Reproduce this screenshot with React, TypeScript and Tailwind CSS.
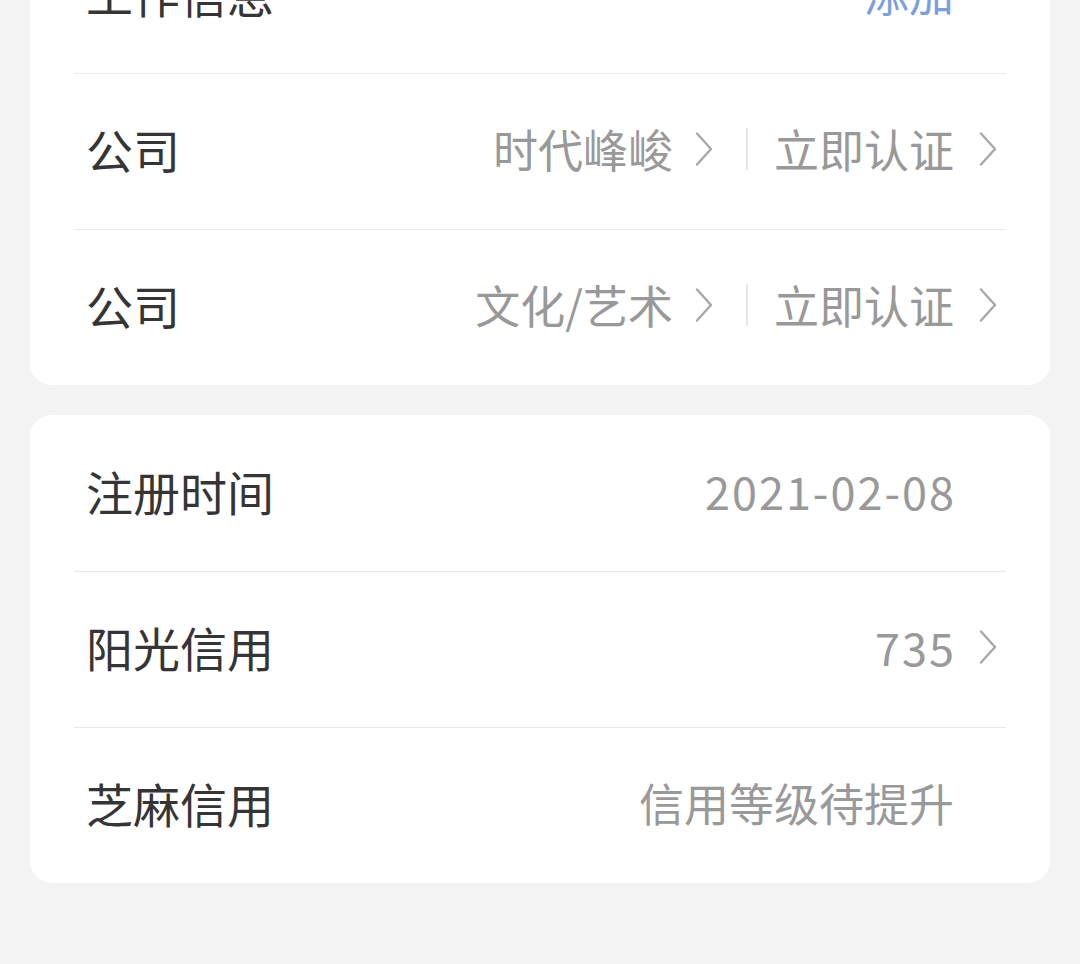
import React from "react";

const FONT = { fontFamily: '"Noto Sans CJK SC", "Noto Sans", sans-serif' };

function Chevron({ hidden = false }: { hidden?: boolean }) {
  return (
    <svg
      width="20"
      height="34"
      viewBox="0 0 20 34"
      className={hidden ? "invisible shrink-0" : "shrink-0"}
    >
      <polyline
        points="3,1.5 17,17 3,32.5"
        fill="none"
        stroke="#a8a8a8"
        strokeWidth="2.4"
        strokeLinecap="round"
        strokeLinejoin="round"
      />
    </svg>
  );
}

type RowProps = {
  label: string;
  value?: string;
  valueClass?: string;
  chevron?: boolean;
  extra?: string;
  first?: boolean;
  numeric?: boolean;
};

function Row({ label, value, valueClass = "text-[#999999]", chevron, extra, first, numeric }: RowProps) {
  return (
    <div
      className={
        "mx-[44px] flex h-[156px] items-center justify-between pb-[6px] " +
        (first ? "" : "border-t border-[#e8e8e8]")
      }
    >
      <span className="pl-[12px] text-[47px] font-normal leading-none text-[#353535]">{label}</span>
      <div className="flex items-center pr-[8px]">
        {extra ? (
          <>
            <span className="text-[45px] font-normal leading-none text-[#999999]">{extra}</span>
            <span className="ml-[21px] flex">
              <Chevron />
            </span>
            <span className="ml-[32px] mr-[26px] h-[42px] w-[2px] bg-[#e6e6e6]" />
          </>
        ) : null}
        <span
          className={
            "text-[45px] font-normal leading-none " +
            (numeric ? "-mr-[2px] tracking-[2px] " : "") +
            valueClass
          }
        >
          {value}
        </span>
        <span className="ml-[24px] flex">
          <Chevron hidden={!chevron} />
        </span>
      </div>
    </div>
  );
}

export default function App() {
  return (
    <div className="h-[964px] w-[1080px] overflow-hidden bg-[#f3f3f3]" style={FONT}>
      <div className="px-[30px]">
        <div className="-mt-[83px] rounded-b-[22px] bg-white">
          <Row first label="工作信息" value="添加" valueClass="text-[#7a9fe0]" />
          <Row label="公司" extra="时代峰峻" value="立即认证" chevron />
          <Row label="公司" extra="文化/艺术" value="立即认证" chevron />
        </div>
        <div className="mt-[30px] rounded-[22px] bg-white">
          <Row first label="注册时间" value="2021-02-08" numeric />
          <Row label="阳光信用" value="735" chevron numeric />
          <Row label="芝麻信用" value="信用等级待提升" />
        </div>
      </div>
    </div>
  );
}
